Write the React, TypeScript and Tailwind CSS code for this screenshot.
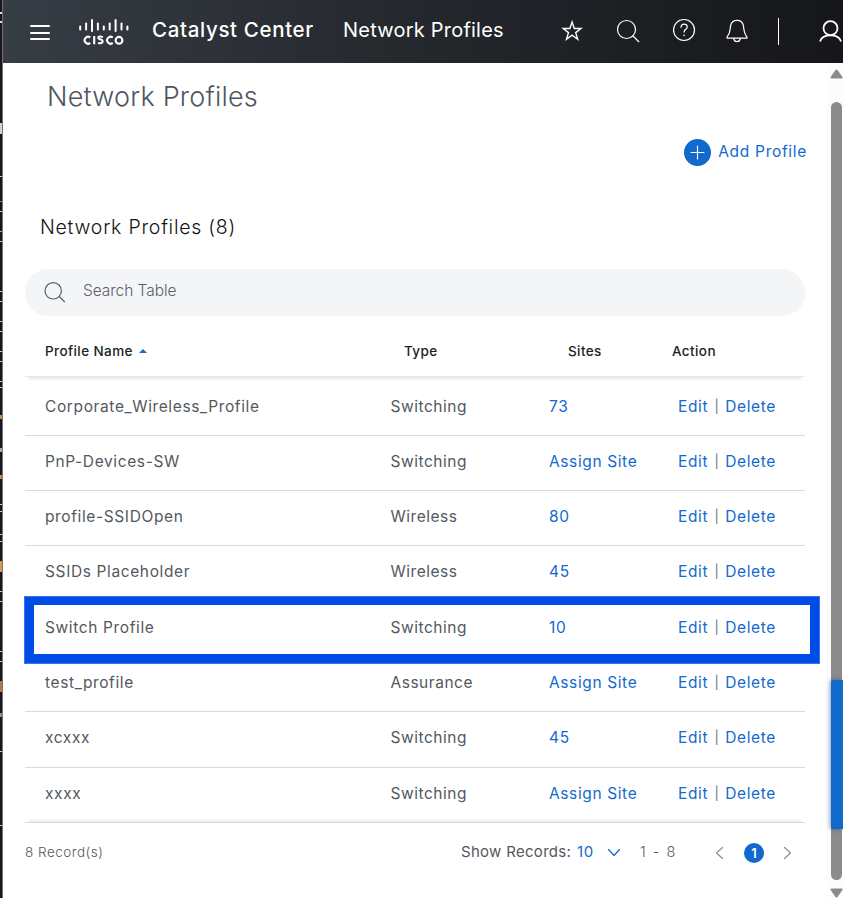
import type { ReactNode } from "react";

type Profile = { name: string; type: string; sites: string };

const profiles: Profile[] = [
  { name: "Corporate_Wireless_Profile", type: "Switching", sites: "73" },
  { name: "PnP-Devices-SW", type: "Switching", sites: "Assign Site" },
  { name: "profile-SSIDOpen", type: "Wireless", sites: "80" },
  { name: "SSIDs Placeholder", type: "Wireless", sites: "45" },
  { name: "Switch Profile", type: "Switching", sites: "10" },
  { name: "test_profile", type: "Assurance", sites: "Assign Site" },
  { name: "xcxxx", type: "Switching", sites: "45" },
  { name: "xxxx", type: "Switching", sites: "Assign Site" },
];

// Slivers of the window behind the panel: [top, height, colour]
const marks: [number, number, string][] = [
  [12, 2, "#dddddd"], [21, 2, "#dddddd"], [123, 11, "#d4d4d4"], [176, 1, "#cccccc"],
  [201, 1, "#c55f68"], [211, 1, "#cccccc"], [231, 1, "#d3959c"], [241, 1, "#cccccc"],
  [291, 1, "#cccccc"], [301, 1, "#cccccc"], [321, 1, "#cccccc"], [331, 1, "#cccccc"],
  [351, 1, "#cccccc"], [361, 1, "#cccccc"], [381, 1, "#cccccc"], [387, 1, "#cccccc"],
  [415, 4, "#c39045"], [448, 4, "#aaaaaa"], [475, 4, "#c39045"], [504, 1, "#cccccc"],
  [511, 1, "#cccccc"], [534, 1, "#cccccc"], [541, 1, "#cccccc"], [561, 11, "#d59b4e"],
  [591, 1, "#cccccc"], [601, 1, "#cccccc"], [651, 1, "#cccccc"], [661, 1, "#cccccc"],
  [681, 11, "#b87a3b"], [713, 4, "#8a8f9b"], [751, 1, "#cccccc"], [825, 1, "#cccccc"],
];

function Svg({ w, h, className, children }: { w: number; h: number; className?: string; children: ReactNode }) {
  return (
    <svg width={w} height={h} viewBox={`0 0 ${w} ${h}`} fill="none" stroke="currentColor" strokeWidth="1.2" strokeLinecap="round" strokeLinejoin="round" className={"block shrink-0 " + (className ?? "")}>
      {children}
    </svg>
  );
}

function CiscoLogo() {
  const bars: [number, number, number][] = [
    [1.2, 7.5, 10.5], [7.1, 4.5, 10.5], [13, 1, 12], [18.9, 4.5, 10.5], [24.8, 7.5, 10.5],
    [30.7, 4.5, 10.5], [36.6, 1, 12], [42.5, 4.5, 10.5], [48.4, 7.5, 10.5],
  ];
  return (
    <Svg w={50} h={27} className="text-white">
      {bars.map(([x, a, b]) => (
        <path key={x} d={`M${x} ${a}V${b}`} strokeWidth="2" />
      ))}
      <g strokeWidth="2.1" strokeLinecap="butt">
        <path d="M11.2 18.6a3.4 3.4 0 1 0 0 5.3M15.2 17.1v8.2M23.9 18c-3-.9-4.6-.5-4.6 1s4.4 1.2 4.4 3.3c0 2-2 2.3-4.7 1.6M33.7 18.6a3.4 3.4 0 1 0 0 5.3" />
        <circle cx="40" cy="21.3" r="3.4" />
      </g>
    </Svg>
  );
}

function Header() {
  return (
    <header className="flex h-[63px] items-start overflow-hidden bg-linear-to-r from-[#373d45] via-[#24272c] to-[#15171a] text-white">
      <div className="ml-[27px] mt-[25px] flex w-[21px] shrink-0 flex-col gap-[4.5px]">
        <span className="h-[2px] w-[20px] rounded bg-white" />
        <span className="h-[2px] w-[20px] rounded bg-white" />
        <span className="h-[2px] w-[20px] rounded bg-white" />
      </div>
      <div className="ml-[28px] mt-[19px] shrink-0"><CiscoLogo /></div>
      <span className="ml-[23px] mt-[15px] w-[191px] shrink-0 whitespace-nowrap text-[20.5px] leading-[30px] font-medium tracking-[0.65px]">Catalyst Center</span>
      <span className="mt-[15px] w-[218px] shrink-0 whitespace-nowrap text-[20px] leading-[30px] tracking-[0.22px]">Network Profiles</span>
      <Svg w={22} h={22} className="mt-[20px]">
        <path strokeWidth="1.4" strokeLinejoin="miter" d="m11.1 2 2.2 6.5h6.7l-5.3 4.1 2 6.6-5.6-4-5.6 4 2-6.6L2.2 8.5h6.7z" />
      </Svg>
      <Svg w={24} h={24} className="ml-[33px] mt-[19px]">
        <circle cx="10.5" cy="10.5" r="9" /><path d="m17 17 5.8 5.7" />
      </Svg>
      <Svg w={24} h={24} className="ml-[33px] mt-[18px]">
        <circle cx="11" cy="12" r="10.5" />
        <path d="M8 9.3c0-2 1.3-3.1 3.1-3.1s3.1 1.2 3.1 2.8c0 2.4-3.1 2.3-3.1 5.1" /><path strokeWidth="1.6" d="M11.1 17.2v.2" />
      </Svg>
      <Svg w={24} h={25} className="ml-[28px] mt-[18px]">
        <path d="M2.4 20.2h19.2c.7 0 .4-1.3-.2-2.1-3-3.8-2.3-6.4-3-10.5-.7-3.6-2.8-5.3-6.4-5.3S6.3 4 5.6 7.6c-.7 4.1 0 6.7-3 10.5-.6.8-.9 2.1-.2 2.1zM8.7 20.6c.3 1.9 1.4 3 3.3 3s3-1.1 3.3-3" />
      </Svg>
      <span className="ml-[29px] mt-[18px] h-[27px] w-px shrink-0 bg-white" />
      <Svg w={24} h={24} className="ml-[40px] mt-[19px]">
        <g strokeWidth="1.8"><circle cx="11.5" cy="9.2" r="7" /><path d="M1.3 21.8c1.3-3.6 5.4-5.4 10.2-5.4s8.9 1.8 10.2 5.4" /></g>
      </Svg>
    </header>
  );
}

function ProfileTable() {
  return (
    <div className="relative mt-[19px] text-[15.5px] text-[#54585d]">
      <div className="relative grid h-[42px] grid-cols-[379px_164px_104px_133px] border-b border-[#e8e8e8] text-[13.5px] leading-[32px] font-[450] tracking-[0.4px] text-[#1c1e21]">
        <span className="flex items-center self-start pl-[20px]">
          Profile Name
          <span className="ml-[6px] border-x-4 border-b-4 border-x-transparent border-b-[#1269cf]" />
        </span>
        <span>Type</span><span>Sites</span><span>Action</span>
      </div>
      <div className="mx-[4px] h-[3.5px] bg-linear-to-b from-[#e6e6e6] to-white" />
      {profiles.map((p) => (
        <div key={p.name} className="grid h-[55.3px] grid-cols-[366px_158px_129px_127px] whitespace-nowrap border-b border-[#d8dadc] leading-[51px] tracking-[0.62px]">
          <span className="pl-[20px]">{p.name}</span>
          <span className="-ml-[0.5px] tracking-[0.52px]">{p.type}</span>
          <span className="text-[#1269cf]">{p.sites}</span>
          <span className="flex text-[#1269cf]">
            Edit<span className="w-[17px] text-center text-[13px] tracking-normal text-[#66717d]">|</span><span className="tracking-[0.65px]">Delete</span>
          </span>
        </div>
      ))}
      <div className="mx-[4px] -mt-[4px] h-[3px] bg-linear-to-t from-[#e8e8e8] to-transparent" />
      <div className="absolute -left-[1px] top-[261px] h-[68px] w-[796px] border-[10px] border-t-[9px] border-[#004ce6] outline -outline-offset-1 outline-[#3b74e8]" />
    </div>
  );
}

function Scrollbar() {
  return (
    <div className="absolute top-[63px] right-0 h-[835px] w-[16px] bg-[#fcfcfc]">
      <svg width="16" height="835" className="absolute inset-0" fill="#8b8b8b">
        <path d="M4.5 15.5c-1 0-1.2-1-.7-1.7L8.5 7c.6-.8 1.4-.8 2 0l4.8 6.8c.5.7.3 1.7-.7 1.7z" />
        <path d="M4.5 825.5c-1 0-1.2 1-.7 1.7l4.7 6.8c.6.8 1.4.8 2 0l4.8-6.8c.5-.7.3-1.7-.7-1.7z" />
      </svg>
      <div className="absolute top-[39px] left-[4px] h-[778px] w-[11px] rounded-full bg-[#8b8b8b]" />
      <div className="absolute top-[617px] left-[4px] h-[149px] w-[12px] rounded-l-[2px] bg-[#1168cd] shadow-[-1px_0_4px_rgba(20,70,130,0.5)]" />
    </div>
  );
}

export default function App() {
  return (
    <div className="relative flex h-[898px] w-[843px] overflow-hidden bg-white font-['Inter','Liberation_Sans',sans-serif]">
      <div className="relative w-[3px] shrink-0 border-r border-[#77717e] bg-[#17171b]">
        {marks.map(([top, height, color]) => (
          <span key={top} className="absolute left-0 w-[2px]" style={{ top, height, backgroundColor: color }} />
        ))}
      </div>
      <div className="w-[840px] shrink-0">
        <Header />
        <main className="ml-[22px] w-[780px]">
          <h1 className="ml-[22px] pt-[15px] text-[27px] leading-[38px] font-light tracking-[0.2px] text-[#50565d]">Network Profiles</h1>
          <div className="mt-[22px] mr-[-2px] flex h-[28px] items-center justify-end text-[#1269cf]">
            <span className="mr-[7px] flex h-[27px] w-[27px] items-center justify-center rounded-full bg-[#1168cd] text-white">
              <Svg w={15} h={15}><path d="M7.5 1v13M1 7.5h13" /></Svg>
            </span>
            <span className="text-[15.5px] tracking-[0.7px]">Add Profile</span>
          </div>
          <h2 className="mt-[46px] ml-[15px] text-[19.5px] leading-[30px] font-[360] tracking-[0.75px] text-[#111214]">Network Profiles (8)</h2>
          <div className="mt-[27px] flex h-[47px] items-center rounded-[23px] bg-[#f4f5f7] text-[#5a6067]">
            <Svg w={22} h={22} className="ml-[19px]"><circle cx="9.2" cy="8.8" r="8.2" /><path d="m15.2 14.5 5.3 5.2" /></Svg>
            <span className="-mt-[4px] ml-[17px] text-[15.5px] font-light tracking-[-0.05px]">Search Table</span>
          </div>
          <ProfileTable />
          <footer className="flex pt-[14px] leading-[32px] text-[#54585d]">
            <span className="w-[436px] text-[13.5px] font-light tracking-[0.5px]">8 Record(s)</span>
            <span className="w-[116px] whitespace-nowrap text-[15px] tracking-[0.3px]">Show Records:</span>
            <span className="w-[30px] text-[15px] tracking-[0.6px] text-[#1269cf]">10</span>
            <Svg w={14} h={9} className="mt-[12px] text-[#1269cf]"><path d="m1.5 1.5 5.5 6 5.5-6" /></Svg>
            <span className="ml-[19px] w-[75px] text-[14.5px] font-light tracking-[1.5px]">1 - 8</span>
            <Svg w={9} h={14} className="mt-[10px] text-[#8b9096]"><path d="M7.5 1.5 1.5 7l6 5.5" /></Svg>
            <span className="mt-[7px] ml-[20px] h-[20px] w-[20px] rounded-full bg-[#1168cd] text-center text-[13px] leading-[20px] font-semibold text-white">1</span>
            <Svg w={9} h={14} className="mt-[10px] ml-[19px] text-[#8b9096]"><path d="m1.5 1.5 6 5.5-6 5.5" /></Svg>
          </footer>
        </main>
      </div>
      <Scrollbar />
    </div>
  );
}
